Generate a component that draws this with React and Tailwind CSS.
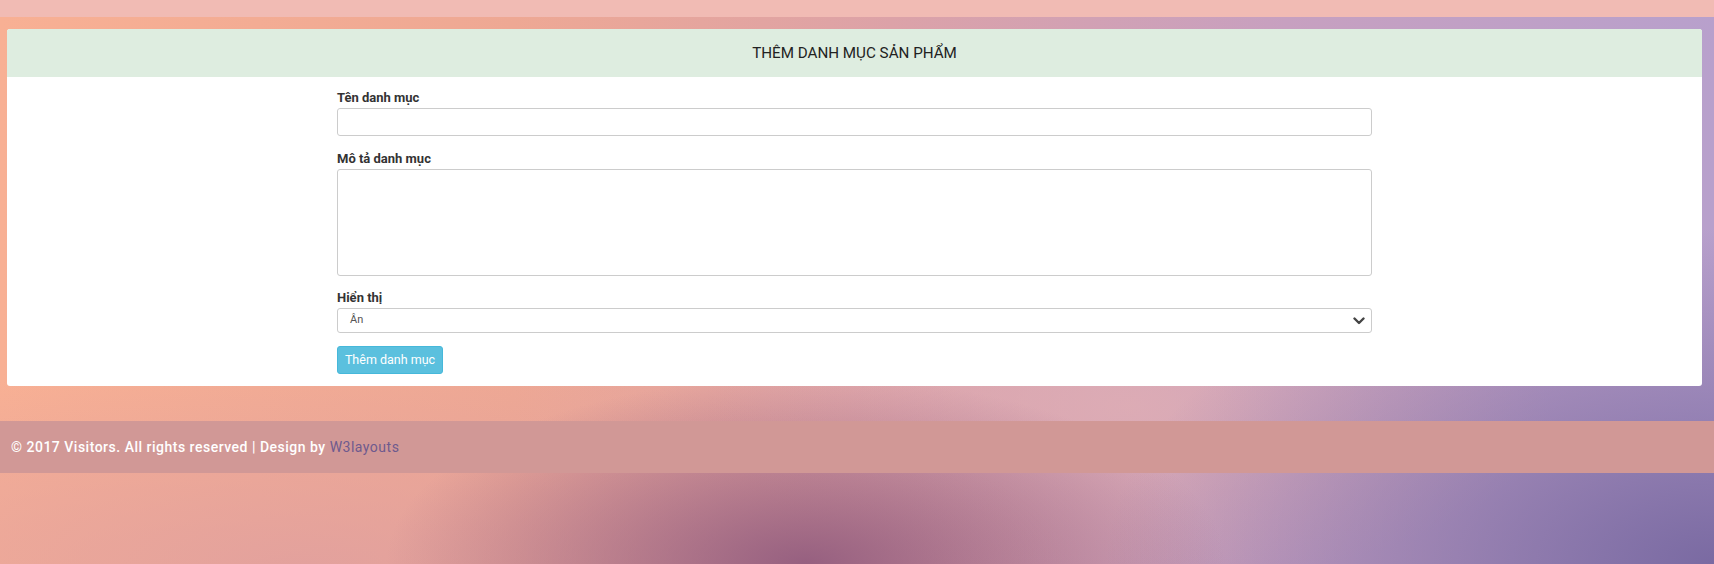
export default function App() {
  return (
    <div className="min-h-screen w-full font-['Roboto','Liberation_Sans',sans-serif] bg-[radial-gradient(ellipse_560px_250px_at_47%_100%,rgba(146,92,126,0.95),rgba(146,92,126,0)_75%),radial-gradient(ellipse_760px_420px_at_100%_100%,rgba(122,106,162,1),rgba(122,106,162,0)_80%),radial-gradient(ellipse_760px_200px_at_18%_100%,rgba(222,158,160,0.75),rgba(222,158,160,0)),radial-gradient(ellipse_420px_180px_at_66%_72%,rgba(226,176,180,0.7),rgba(226,176,180,0)),linear-gradient(to_right,#f8b094_0%,#eea894_30%,#dca2a8_52%,#c7a0c0_75%,#b8a0cc_100%)]">
      <div className="h-[17px] bg-[#f1bbb4]" />
      <div className="ml-[7px] mt-[12px] w-[1695px] overflow-hidden rounded-[3px] bg-white">
        <div className="flex h-[48px] items-center justify-center bg-[#deede0] text-[15.2px] text-[#222]">
          THÊM DANH MỤC SẢN PHẨM
        </div>
        <div className="flex justify-center pb-[12px] pt-[12px]">
          <form className="w-[1035px]">
            <div className="mb-[14px]">
              <label className="mb-px block text-[13px] font-bold leading-[18px] text-[#333]">Tên danh mục</label>
              <input type="text" className="block h-[28px] w-full rounded-[3px] border border-[#ccc] bg-white px-3 text-[13px] outline-none" />
            </div>
            <div className="mb-[13px]">
              <label className="mb-px block text-[13px] font-bold leading-[18px] text-[#333]">Mô tả danh mục</label>
              <textarea className="block h-[107px] w-full resize-none rounded-[3px] border border-[#ccc] bg-white px-3 text-[13px] outline-none" />
            </div>
            <div className="mb-[13px]">
              <label className="mb-px block text-[13px] font-bold leading-[18px] text-[#333]">Hiển thị</label>
              <div className="relative flex h-[25px] w-full items-center rounded-[3px] border border-[#ccc] bg-white pl-[12px] text-[11px] text-[#555]">
                <span>Ân</span>
                <svg className="absolute right-[6px] top-[8px]" width="12" height="8" viewBox="0 0 12 8" fill="none">
                  <path d="M1.5 1.5l4.5 4.5 4.5-4.5" stroke="#444" strokeWidth="2.4" strokeLinecap="round" strokeLinejoin="round" />
                </svg>
              </div>
            </div>
            <button type="button" className="h-[28px] w-[106px] rounded-[3px] border border-[#46b8da] bg-[#5bc0de] text-[12.5px] text-white">
              Thêm danh mục
            </button>
          </form>
        </div>
      </div>
      <div className="mt-[35px] flex h-[52px] items-center bg-[#d19896] px-[11px] text-[14px] font-medium tracking-[0.5px] text-white">
        <span>© 2017 Visitors. All rights reserved | Design by <span className="font-normal text-[#6e5a8e]">W3layouts</span></span>
      </div>
    </div>
  );
}
